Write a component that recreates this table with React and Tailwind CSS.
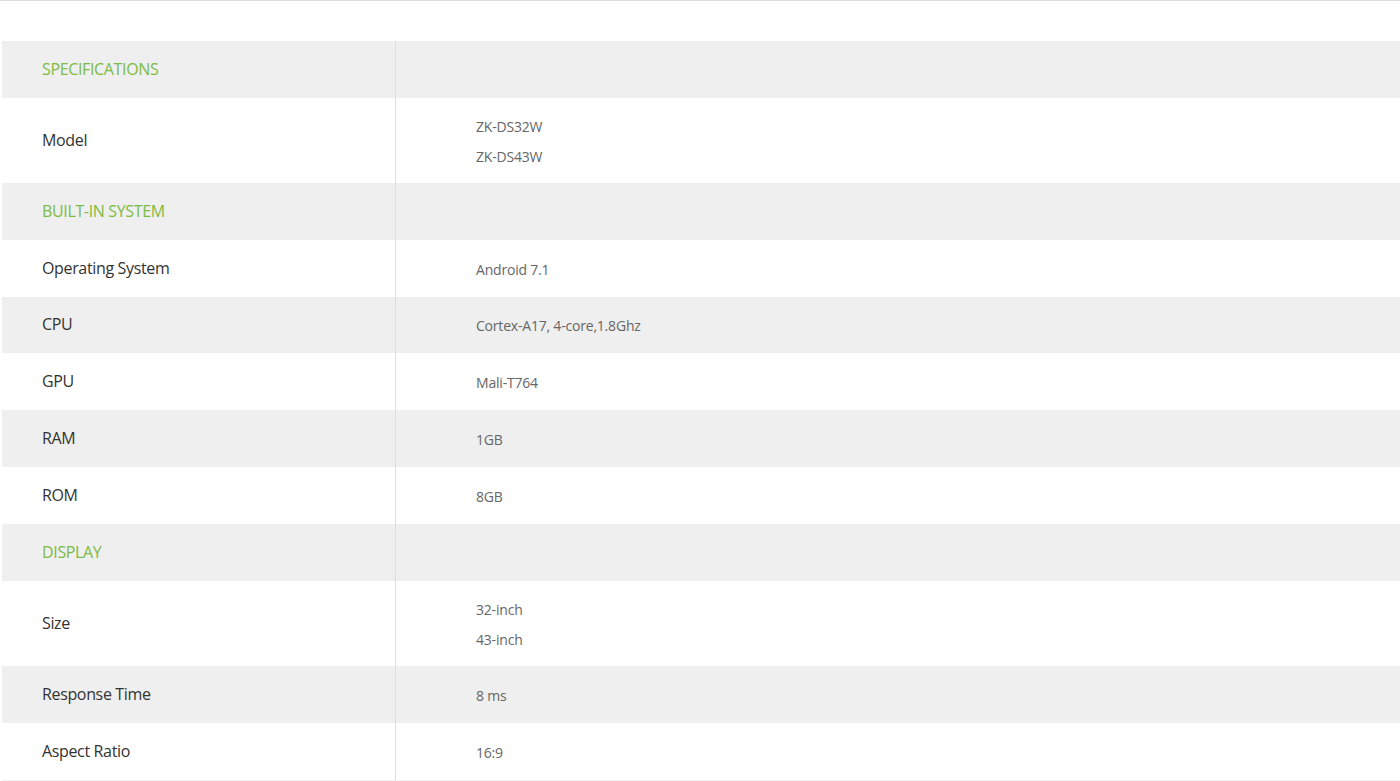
export default function App() {
  const rows = [
    { h: true, label: "SPECIFICATIONS", hgt: "h-[57px]" },
    { label: "Model", values: ["ZK-DS32W", "ZK-DS43W"], hgt: "h-[85px]" },
    { h: true, label: "BUILT-IN SYSTEM", hgt: "h-[57px]" },
    { label: "Operating System", values: ["Android 7.1"], hgt: "h-[57px]" },
    { label: "CPU", values: ["Cortex-A17, 4-core,1.8Ghz"], hgt: "h-[56px]" },
    { label: "GPU", values: ["Mali-T764"], hgt: "h-[57px]" },
    { label: "RAM", values: ["1GB"], hgt: "h-[57px]" },
    { label: "ROM", values: ["8GB"], hgt: "h-[57px]" },
    { h: true, label: "DISPLAY", hgt: "h-[57px]" },
    { label: "Size", values: ["32-inch", "43-inch"], hgt: "h-[85px]" },
    { label: "Response Time", values: ["8 ms"], hgt: "h-[57px]" },
    { label: "Aspect Ratio", values: ["16:9"], hgt: "h-[57px]" },
  ];
  return (
    <div className="w-[1400px] h-[781px] bg-white overflow-hidden" style={{ fontFamily: '"Open Sans", "Noto Sans", sans-serif' }}>
      <div className="h-[41px] border-t border-[#dcdcdc]" />
      <div className="ml-[2px] border-b border-[#f0f0f0]">
        {rows.map((r, i) => {
          const gray = i % 2 === 0;
          return (
            <div key={i} className={`flex ${r.hgt} ${gray ? "bg-[#efefef]" : "bg-white"}`}>
              <div className="w-[394px] shrink-0 border-r border-[#dddddd] flex items-center pl-[40px] pb-[2px]">
                <span className={`text-[16px] tracking-[-0.35px] ${r.h ? "text-[#7dbb42]" : "text-[#333333]"}`}>{r.label}</span>
              </div>
              <div className="flex-1 flex flex-col justify-center pl-[80px] pt-[2px]">
                {r.values && r.values.map((v, j) => (
                  <div key={j} className="text-[14px] leading-[30px] tracking-[-0.2px] text-[#666666]">{v}</div>
                ))}
              </div>
            </div>
          );
        })}
      </div>
    </div>
  );
}
